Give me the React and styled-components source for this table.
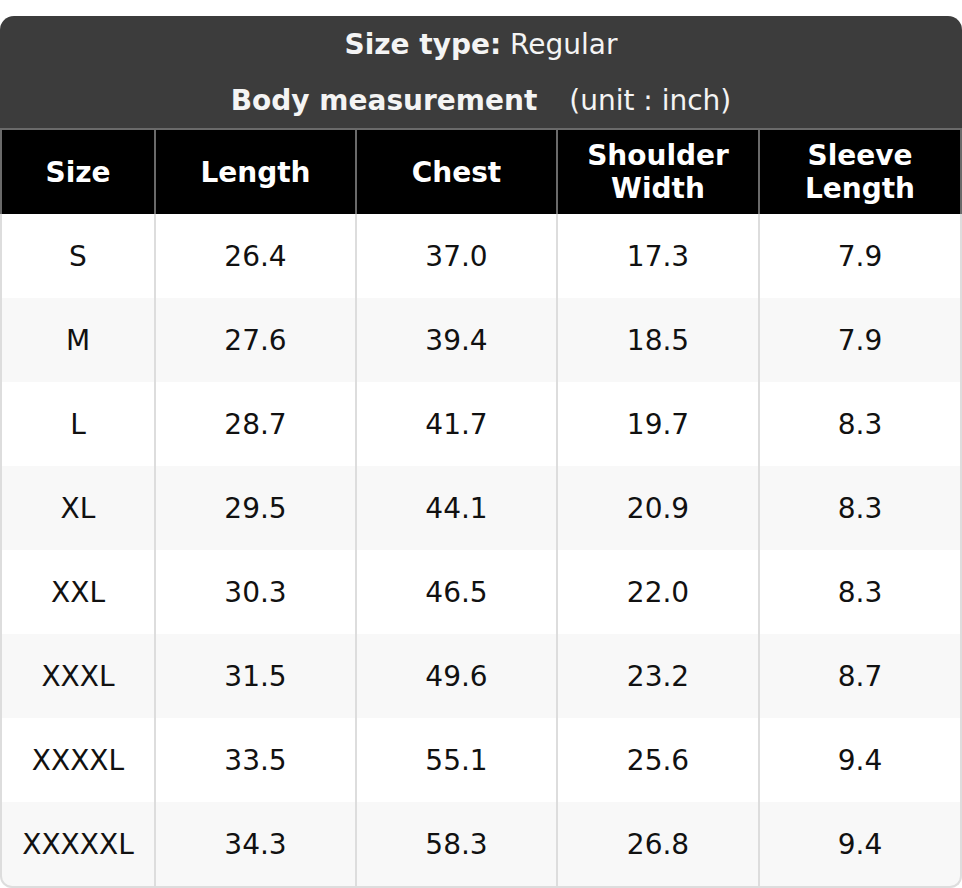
import React from "react";
import styled, { createGlobalStyle } from "styled-components";

const GlobalStyle = createGlobalStyle`
  html, body {
    margin: 0;
    padding: 0;
    background: #ffffff;
  }
  body {
    font-family: "DejaVu Sans", "Liberation Sans", sans-serif;
  }
`;

const Page = styled.div`
  padding-top: 16px;
  width: 962px;
`;

const Table = styled.table`
  width: 962px;
  table-layout: fixed;
  border-collapse: separate;
  border-spacing: 0;
  font-family: "DejaVu Sans", "Liberation Sans", sans-serif;
  font-size: 28px;
`;

const TitleCell = styled.th`
  background: #3c3c3c;
  color: #f4f4f4;
  height: 56px;
  padding: 0;
  text-align: center;
  vertical-align: middle;
  font-weight: 400;
  border-top-left-radius: ${(p) => (p.$top ? "14px" : "0")};
  border-top-right-radius: ${(p) => (p.$top ? "14px" : "0")};
  border-bottom: ${(p) => (p.$last ? "2px solid #6a6a6a" : "none")};
`;

const Bold = styled.b`
  font-weight: 700;
`;

const Unit = styled.span`
  margin-left: 32px;
`;

const HeadCell = styled.th`
  background: #000000;
  color: #ffffff;
  font-weight: 700;
  height: 84px;
  padding: 0 8px;
  line-height: 33px;
  text-align: center;
  vertical-align: middle;
  border-right: 2px solid #6a6a6a;
  border-left: ${(p) => (p.$first ? "2px solid #6a6a6a" : "none")};
`;

const Row = styled.tr`
  background: ${(p) => (p.$alt ? "#f8f8f8" : "#ffffff")};
`;

const Cell = styled.td`
  height: 84px;
  padding: 0;
  color: #111111;
  text-align: center;
  vertical-align: middle;
  border-right: 2px solid #dddddd;
  border-left: ${(p) => (p.$first ? "2px solid #dddddd" : "none")};
  border-bottom: ${(p) => (p.$last ? "2px solid #dddddd" : "none")};
  border-bottom-left-radius: ${(p) => (p.$last && p.$first ? "12px" : "0")};
  border-bottom-right-radius: ${(p) => (p.$last && p.$end ? "12px" : "0")};
`;

const columns = ["Size", "Length", "Chest", "Shoulder Width", "Sleeve Length"];
const widths = [156, 201, 201, 202, 202];

const rows = [
  ["S", "26.4", "37.0", "17.3", "7.9"],
  ["M", "27.6", "39.4", "18.5", "7.9"],
  ["L", "28.7", "41.7", "19.7", "8.3"],
  ["XL", "29.5", "44.1", "20.9", "8.3"],
  ["XXL", "30.3", "46.5", "22.0", "8.3"],
  ["XXXL", "31.5", "49.6", "23.2", "8.7"],
  ["XXXXL", "33.5", "55.1", "25.6", "9.4"],
  ["XXXXXL", "34.3", "58.3", "26.8", "9.4"],
];

export default function App() {
  return (
    <>
      <GlobalStyle />
      <Page>
        <Table>
          <colgroup>
            {widths.map((w, i) => (
              <col key={i} style={{ width: w }} />
            ))}
          </colgroup>
          <thead>
            <tr>
              <TitleCell colSpan={5} $top>
                <Bold>Size type:</Bold> Regular
              </TitleCell>
            </tr>
            <tr>
              <TitleCell colSpan={5} $last>
                <Bold>Body measurement</Bold>
                <Unit>(unit : inch)</Unit>
              </TitleCell>
            </tr>
            <tr>
              {columns.map((c, i) => (
                <HeadCell key={c} $first={i === 0}>
                  {c}
                </HeadCell>
              ))}
            </tr>
          </thead>
          <tbody>
            {rows.map((r, ri) => (
              <Row key={r[0]} $alt={ri % 2 === 1}>
                {r.map((v, ci) => (
                  <Cell
                    key={ci}
                    $first={ci === 0}
                    $end={ci === r.length - 1}
                    $last={ri === rows.length - 1}
                  >
                    {v}
                  </Cell>
                ))}
              </Row>
            ))}
          </tbody>
        </Table>
      </Page>
    </>
  );
}
